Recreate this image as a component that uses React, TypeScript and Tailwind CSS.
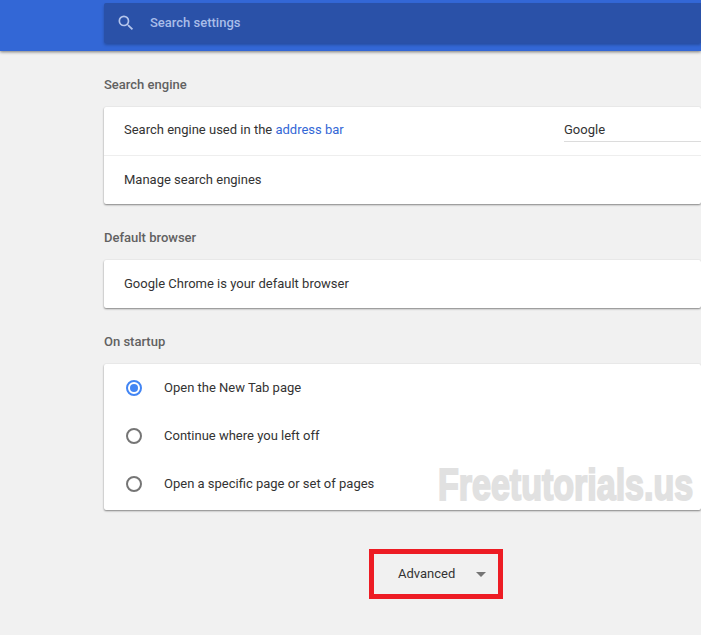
function Heading({ children }: { children: React.ReactNode }) {
  return <h2 className="h-[56px] pt-[25px] pb-[6px] text-[13px] leading-[18px] font-medium text-[#616161]">{children}</h2>;
}

function SearchIcon() {
  return (
    <svg viewBox="0 0 24 24" className="h-5 w-5 fill-[#b4c5ec]">
      <path d="M15.5 14h-.79l-.28-.27A6.471 6.471 0 0 0 16 9.5 6.5 6.5 0 1 0 9.5 16c1.61 0 3.09-.59 4.23-1.57l.27.28v.79l5 4.99L20.49 19l-4.99-5zm-6 0C7.01 14 5 11.99 5 9.5S7.01 5 9.5 5 14 7.01 14 9.5 11.99 14 9.5 14z" />
    </svg>
  );
}

function Radio({ label, on }: { label: string; on?: boolean }) {
  return (
    <div className="flex h-[48px] items-center pl-[22px]">
      <span className={`flex h-4 w-4 items-center justify-center rounded-full border-2 ${on ? "border-[#4285f4]" : "border-[#757575]"}`}>
        {on && <span className="h-2 w-2 rounded-full bg-[#4285f4]" />}
      </span>
      <span className="ml-[22px] text-[13px] text-[#333]">{label}</span>
    </div>
  );
}

const card = "bg-white rounded-[2px] shadow-[0_1px_2px_rgba(0,0,0,0.45),0_0_2px_rgba(0,0,0,0.06)]";

export default function App() {
  return (
    <div className="relative h-[635px] w-[701px] overflow-hidden bg-[#f1f1f1] font-['Roboto',sans-serif]">
      <header className="h-[51px] bg-[#3367d6] pl-[104px] pt-[3px] shadow-[0_1px_3px_rgba(0,0,0,0.5)]">
        <div className="flex h-[40px] items-center rounded-l-[2px] bg-[#2a51a8] pl-[12px] shadow-[0_2px_3px_rgba(0,0,0,0.25)]">
          <SearchIcon />
          <span className="ml-[14px] text-[13px] font-medium text-[#a9bde8]">Search settings</span>
        </div>
      </header>

      <main className="pl-[104px]">
        <Heading>Search engine</Heading>
        <section className={card}>
          <div className="flex h-[49px] items-center border-b border-[#eeeeee] pb-[2px] pl-[20px] text-[13px] text-[#333]">
            <span>
              Search engine used in the <a className="text-[#3367d6]">address bar</a>
            </span>
            <div className="ml-auto flex h-[24px] w-[137px] items-center border-b border-[#dcdcdc] text-[13px]">Google</div>
          </div>
          <div className="flex h-[48px] items-center pl-[20px] text-[13px] text-[#333]">Manage search engines</div>
        </section>

        <Heading>Default browser</Heading>
        <section className={card}>
          <div className="flex h-[48px] items-center pb-[1px] pl-[20px] text-[13px] text-[#333]">Google Chrome is your default browser</div>
        </section>

        <Heading>On startup</Heading>
        <section className={`${card} pb-[2px]`}>
          <Radio label="Open the New Tab page" on />
          <Radio label="Continue where you left off" />
          <Radio label="Open a specific page or set of pages" />
        </section>

        <div className="ml-[265px] mt-[39px] flex h-[50px] w-[134px] items-center border-[5px] border-[#ed1c24] pl-[24px]">
          <span className="text-[13px] text-[#333]">Advanced</span>
          <span className="ml-[21px] h-0 w-0 border-x-[5px] border-t-[5px] border-x-transparent border-t-[#757575]" />
        </div>
      </main>

      <div className="absolute left-[438px] top-[460px] origin-left scale-x-[0.773] font-['Liberation_Sans',sans-serif] text-[44px] leading-[50px] font-bold whitespace-nowrap text-[#e1e1e1] [-webkit-text-stroke:2px_#e1e1e1]">
        Freetutorials.us
      </div>
    </div>
  );
}
